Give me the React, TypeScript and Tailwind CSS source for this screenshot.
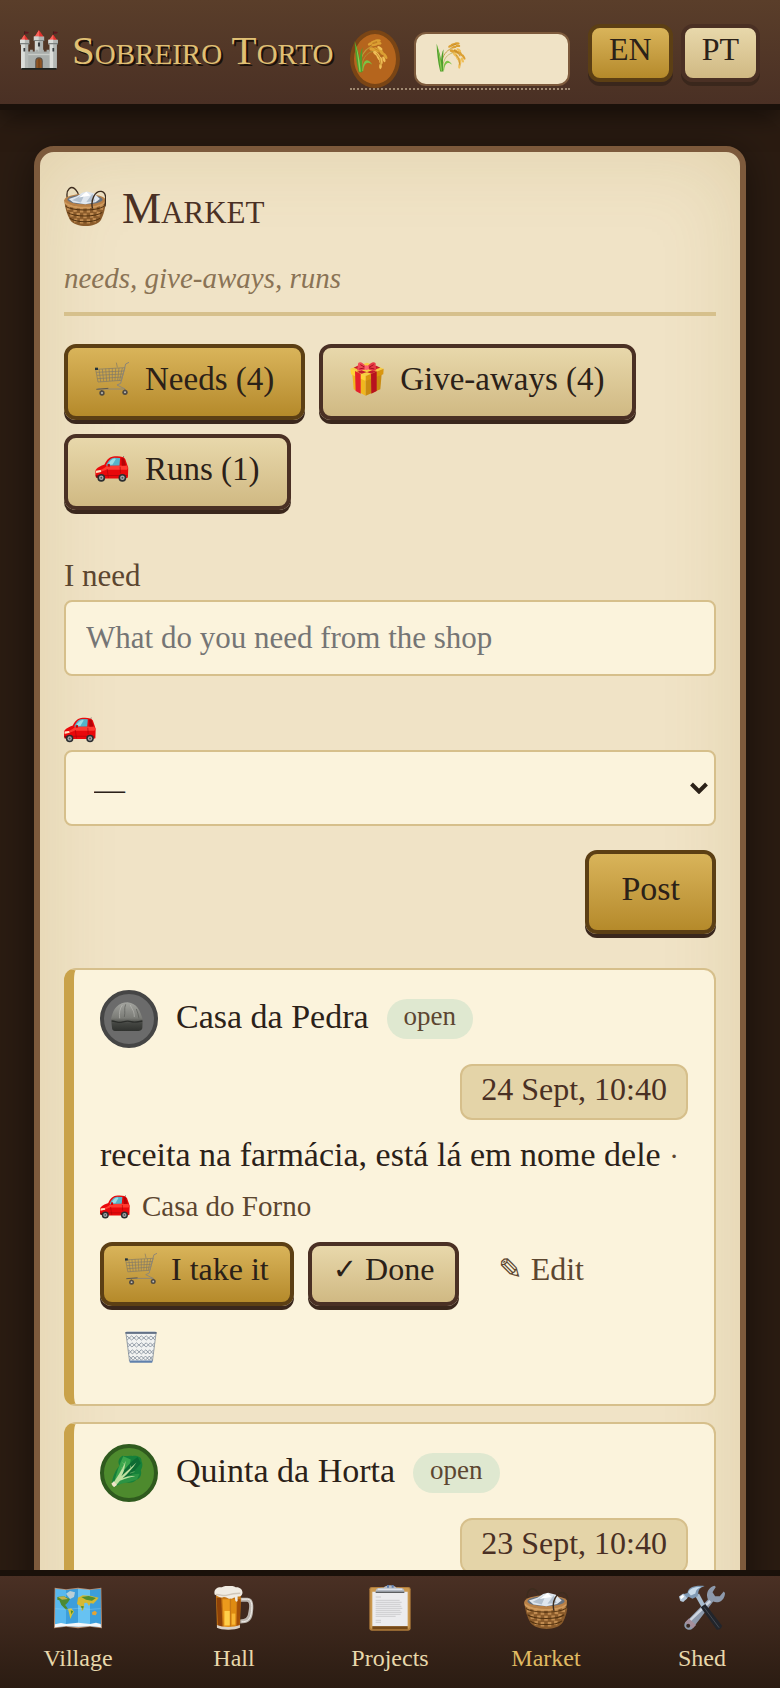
import React from "react";

type IconProps = { className: string };

function Castle({ className }: IconProps) {
  return (
    <svg viewBox="0 0 110 116" className={className} aria-hidden="true">
      <path d="M13 4v16M97 4v16M55 0v6" stroke="#2a1c18" strokeWidth="2" />
      <path d="M14 4l12 2-3 4-9 1zM98 4l12 2-3 4-9 1z" fill="#5d1620" />
      <path d="M2 30L13 13l12 17zM84 30L96 13l12 17zM42 20L55 0l14 20z" fill="#e2322d" />
      <path d="M42 20L55 0l1 20zM2 30l11-17 1 17zM84 30l12-17 1 17z" fill="#f8635a" />
      <path d="M40 19h30v12h-3v34H43V31h-3z" fill="#aeb3b1" />
      <path d="M40 19h14v46H43V31h-3z" fill="#d3d6d2" />
      <path d="M22 62h7v-5h8v5h8v-5h8v5h8v-5h8v5h8v-5h8v5h7v50H22z" fill="#a9aeab" />
      <path d="M22 69h68v4H22z" fill="#c9ccc8" />
      <path d="M0 28h27v13h-3v71H3V41H0zM82 28h28v13h-3v71H86V41h-4z" fill="#b5b9b6" />
      <path d="M0 28h14v84H3V41H0zM82 28h14v84H86V41h-4z" fill="#dcdeda" />
      <path d="M0 38h27v3H0zM82 38h28v3H82zM40 29h30v3H40z" fill="#7c817f" />
      <path d="M10 52h5v10h-5zM94 52h5v10h-5zM52 36h6v12h-6z" fill="#3b3f42" />
      <path d="M44 112V91a11 12 0 0 1 22 0v21z" fill="#5b5148" />
      <path d="M47 112V92a8 9 0 0 1 16 0v20z" fill="#8f5523" />
      <path d="M55 84v28" stroke="#59300f" strokeWidth="2" />
      <path d="M4 110h102v5H4z" fill="#20231f" />
    </svg>
  );
}

function Wheat({ className }: IconProps) {
  return (
    <svg viewBox="0 0 100 100" className={className} aria-hidden="true">
      <path d="M18 97C16 60 22 22 80 12" fill="none" stroke="#bf9a3a" strokeWidth="3" />
      <path d="M22 95C22 60 34 30 84 34" fill="none" stroke="#a8a23a" strokeWidth="2" />
      <path d="M14 98C6 66 3 36 2 6 9 28 14 42 17 60 18 46 20 34 25 24 24 52 22 70 25 98z" fill="#4e9f2b" />
      <path d="M16 96c-5-30-5-58-14-90 9 30 15 54 18 90z" fill="#8fcc52" />
      <path d="M24 94c2-32 14-42 30-18-14-12-24-6-27 18z" fill="#7cc344" />
      <g fill="#dca033">
        <ellipse cx="48" cy="14" rx="8" ry="4" transform="rotate(-25 48 14)" />
        <ellipse cx="58" cy="8" rx="9" ry="4" transform="rotate(-15 58 8)" />
        <ellipse cx="70" cy="5" rx="9" ry="4" />
        <ellipse cx="60" cy="17" rx="9" ry="4" transform="rotate(-10 60 17)" />
        <ellipse cx="73" cy="13" rx="8" ry="4" />
        <ellipse cx="54" cy="30" rx="9" ry="5" transform="rotate(15 54 30)" />
        <ellipse cx="67" cy="32" rx="10" ry="5" transform="rotate(35 67 32)" />
        <ellipse cx="80" cy="38" rx="11" ry="5" transform="rotate(50 80 38)" />
        <ellipse cx="92" cy="50" rx="10" ry="4" transform="rotate(60 92 50)" />
      </g>
      <g fill="#efbe57">
        <ellipse cx="64" cy="42" rx="9" ry="5" transform="rotate(40 64 42)" />
        <ellipse cx="72" cy="52" rx="11" ry="5" transform="rotate(65 72 52)" />
        <ellipse cx="79" cy="64" rx="11" ry="5" transform="rotate(80 79 64)" />
        <ellipse cx="78" cy="80" rx="9" ry="4" transform="rotate(95 78 80)" />
        <ellipse cx="88" cy="60" rx="9" ry="4" transform="rotate(70 88 60)" />
        <ellipse cx="76" cy="27" rx="9" ry="4" transform="rotate(35 76 27)" />
      </g>
      <path d="M60 28l12 6 8 14M66 42l10 14 4 22M54 12l14-5" stroke="#b67a1f" strokeWidth="2" fill="none" />
    </svg>
  );
}

function Basket({ className }: IconProps) {
  return (
    <svg viewBox="0 0 124 118" className={className} aria-hidden="true">
      <path d="M10 38C4 8 22-2 34 10c6 6 8 12 9 18" fill="none" stroke="#3d2c1e" strokeWidth="4" />
      <path d="M1 42h122c0 24-6 42-14 58-16 24-74 24-91 0C9 84 3 66 1 42z" fill="#8a5b2b" />
      <g stroke="#c08b50" strokeWidth="10">
        <path d="M12 58l2 13M32 62l1 14M52 64v14M72 64v14M92 62l-1 14M112 56l-2 14" />
        <path d="M22 77l2 13M42 80v14M62 81v14M82 80v14M102 76l-2 13" />
        <path d="M34 96l1 11M52 98v13M72 98v13M90 95l-1 12" />
      </g>
      <path d="M5 60c20 14 92 14 113 0M10 78c20 14 84 14 103 0M17 95c18 14 72 14 90 0" stroke="#51310f" strokeWidth="3" fill="none" />
      <ellipse cx="62" cy="42" rx="61" ry="19" fill="#b98046" />
      <ellipse cx="62" cy="40" rx="52" ry="14" fill="#67727f" />
      <path d="M14 38l24-8 16-10 14-4 22 6 16 16-13 10-30 6-36-5z" fill="#dfe6ee" />
      <path d="M24 42l38-20-12 27zM66 47l18-24 8 22z" fill="#b3c0ce" />
      <path d="M44 34l22-17 12 11z" fill="#fff" />
      <path d="M1 42c8 22 104 28 122 0v7c-18 24-112 22-121 2z" fill="#d09a5c" />
      <path d="M84 66C78 40 92 14 110 16c16 4 14 20 11 44" fill="none" stroke="#3d2c1e" strokeWidth="4" />
    </svg>
  );
}

function Cart({ className }: IconProps) {
  return (
    <svg viewBox="0 0 102 102" className={className} aria-hidden="true">
      <g fill="none" stroke="#7d7768" strokeWidth="2">
        <path d="M2 22l7 38 70-5 11-38zM4 31l83-4M6 40l78-4M7 50l74-5" />
        <path d="M12 21l5 38M22 21l4 37M32 20l3 38M42 20l2 37M52 19v38M62 19l-2 37M72 18l-4 37M82 18l-8 37" />
        <path d="M64 2l3 14" />
      </g>
      <path d="M102 1l-10 5-15 58-11 5 24 12H8" fill="none" stroke="#8d8678" strokeWidth="3" strokeLinejoin="round" />
      <path d="M4 82l36-3M20 84v8M90 82v6" stroke="#5e594e" strokeWidth="3" />
      <path d="M0 17h9v7H0z" fill="#24333b" />
      <circle cx="21" cy="93" r="8" fill="#514b43" />
      <circle cx="90" cy="91" r="8" fill="#514b43" />
      <circle cx="21" cy="93" r="3" fill="#c3bfb6" />
      <circle cx="90" cy="91" r="3" fill="#c3bfb6" />
    </svg>
  );
}

function Gift({ className }: IconProps) {
  return (
    <svg viewBox="0 0 100 102" className={className} aria-hidden="true">
      <path d="M6 36l40 18v47L10 82z" fill="#f0b71e" />
      <path d="M46 54l48-18-4 46-44 19z" fill="#c98a10" />
      <path d="M0 20L50 2l50 18-54 22z" fill="#f7ce42" />
      <path d="M0 20l46 22v15L2 37z" fill="#ffd338" />
      <path d="M46 42l54-22-1 17-53 20z" fill="#d9960f" />
      <path d="M14 27l17 8v60l-15-8z" fill="#e4202c" />
      <path d="M62 36l17-8v59l-16 8z" fill="#b8121f" />
      <path d="M22 11l56 17-14 7-54-18zM78 11L20 29l14 6 56-18z" fill="#c51c2a" />
      <path d="M48 16C36-4 22-2 23 8l-3 17c10 3 22-1 28-7z" fill="#f04a56" />
      <path d="M50 16C62-4 78-2 76 8l2 17c-10 3-22-1-28-7z" fill="#e73946" />
      <path d="M30 8l16 9-19 4M70 8l-16 9 18 4" stroke="#a81120" strokeWidth="3" fill="none" />
      <ellipse cx="49" cy="17" rx="7" ry="7" fill="#ff6470" />
    </svg>
  );
}

function Car({ className }: IconProps) {
  return (
    <svg viewBox="0 0 102 80" className={className} aria-hidden="true">
      <path d="M84 10l3-10" stroke="#555" strokeWidth="2" />
      <path d="M0 46c2-10 18-16 28-20C36 10 44 2 60 1c16-1 28 1 32 9l9 26-1 30-8 3H8l-8-9z" fill="#e9080b" />
      <path d="M2 46c14-2 24-6 34-16l60-1 4 8-3 5H34L2 54z" fill="#ff3a30" />
      <path d="M33 28C40 12 48 6 58 5l18 1-2 23-40 1z" fill="#55b4c9" />
      <path d="M39 26c6-11 12-17 20-18l4 1-11 18z" fill="#9bdde4" />
      <path d="M80 6l8 2 6 21-13 1z" fill="#b40408" />
      <path d="M36 40l4 27M76 33l1 20M2 60h96" stroke="#aa0509" strokeWidth="2" fill="none" />
      <path d="M2 45l14-2 2 6-16 3z" fill="#ffe3c5" />
      <path d="M0 60h10v7H2z" fill="#8b0306" />
      <circle cx="18" cy="67" r="12" fill="#2b2d2f" />
      <circle cx="83" cy="67" r="12" fill="#2b2d2f" />
      <circle cx="18" cy="67" r="7" fill="#a7abad" />
      <circle cx="83" cy="67" r="7" fill="#a7abad" />
      <circle cx="18" cy="67" r="3" fill="#505456" />
      <circle cx="83" cy="67" r="3" fill="#505456" />
      <path d="M37 25l7-1 1 8-7 1z" fill="#c30509" />
    </svg>
  );
}

function Rock({ className }: IconProps) {
  return (
    <svg viewBox="0 0 96 88" className={className} aria-hidden="true">
      <defs>
        <linearGradient id="stone" x1="0" y1="0" x2="0" y2="1">
          <stop offset="0" stopColor="#a3a49f" />
          <stop offset="0.55" stopColor="#7a7b76" />
          <stop offset="0.72" stopColor="#454743" />
          <stop offset="1" stopColor="#2f312e" />
        </linearGradient>
      </defs>
      <path d="M0 50C4 34 8 22 16 14 26 4 38 0 50 0c14 2 24 8 30 16 8 12 12 24 15 36l-1 26c-2 6-6 8-12 8H12c-6-1-9-4-9-10z" fill="url(#stone)" />
      <path d="M34 8c-8 12-10 24-8 40M58 8c4 12 12 16 12 36" stroke="#bcbdb7" strokeWidth="3" fill="none" opacity="0.6" />
      <path d="M44 6c-6 14 0 22-4 38M76 20c4 10 6 18 8 28" stroke="#5b5c58" strokeWidth="3" fill="none" opacity="0.7" />
      <path d="M2 56c12 0 18 6 28 4s18-6 30-2 22 0 34-2" stroke="#2c2e2b" strokeWidth="4" fill="none" />
    </svg>
  );
}

function Lettuce({ className }: IconProps) {
  return (
    <svg viewBox="0 0 100 102" className={className} aria-hidden="true">
      <path d="M2 92C4 66 14 48 26 34 18 20 26 6 36 2c12 4 20-2 32 1 14-2 30 4 28 16 6 12 2 22-2 30 4 14-2 26-14 30-10 12-28 10-38 6L8 102z" fill="#15813a" />
      <path d="M8 94C14 62 26 30 38 4l24 10-6 34z" fill="#3aa54c" />
      <path d="M12 94C30 60 52 28 84 6l10 20-30 36z" fill="#0d6c33" />
      <path d="M14 96c22-24 42-34 76-36l-8 18-26 8z" fill="#2c9444" />
      <path d="M2 96C18 70 32 52 46 18 42 44 40 54 32 68 50 50 66 38 80 24 68 42 54 58 36 74c16-6 28-8 40-6-16 3-32 7-48 14L10 102z" fill="#bfe0a0" />
      <path d="M0 92l8-8 10 12-10 6z" fill="#f2e3c9" />
      <path d="M42 32l-6-8M40 46l-8-5M62 44l-1-10M60 58l14-5" stroke="#86c878" strokeWidth="2" />
    </svg>
  );
}

function Trash({ className }: IconProps) {
  return (
    <svg viewBox="0 0 90 92" className={className} aria-hidden="true">
      <path d="M2 6h86L78 88H12z" fill="#f1f2f1" />
      <g fill="none" stroke="#6f7c8c" strokeWidth="2">
        <path d="M4 14l14 12 14-12 14 12 14-12 14 12 12-12M5 26l13-12 14 12 14-12 14 12 14-12 11 12" />
        <path d="M6 34l13 12 13-12 14 12 14-12 12 12 12-12M7 46l12-12 13 12 14-12 14 12 12-12 11 12" />
        <path d="M9 54l11 12 13-12 13 12 13-12 11 12 11-12M9 66l11-12 13 12 13-12 13 12 11-12 10 12" />
        <path d="M11 72l11 12 12-12 12 12 12-12 11 12 9-12M12 84l10-12 12 12 12-12 12 12 11-12 9 12" />
        <path d="M2 8l10 78M88 8L78 86" />
      </g>
      <path d="M0 3h90v5H0z" fill="#4f5f78" />
      <path d="M3 2h84" stroke="#aeb9c9" strokeWidth="2" />
      <path d="M11 85h68l-2 6H13z" fill="#6080ac" />
    </svg>
  );
}

function WorldMap({ className }: IconProps) {
  return (
    <svg viewBox="0 0 144 126" className={className} aria-hidden="true">
      <path d="M2 2l34 5 36-5 36 5 34-5 2 122-36-5-36 5-36-5-36 5z" fill="#b98f72" />
      <path d="M4 5l32 4v108l-33 4z" fill="#58b8ee" />
      <path d="M36 9l36-4v114l-36-2z" fill="#3c9edc" />
      <path d="M72 5l36 4v108l-36 2z" fill="#67c2f2" />
      <path d="M108 9l32-4 1 116-33-4z" fill="#3c9edc" />
      <path d="M36 20l12-8 15 4-3 14-12 6z" fill="#b9cfd6" />
      <path d="M10 30l20-2 18 8-6 10-8 8 8 12-6 2-14-14-6-14-6-2z" fill="#4c8a34" />
      <path d="M12 30l18-2 12 8-18 2z" fill="#c3b24a" />
      <path d="M42 66l10-2 8 10-6 10-5 12-3-14z" fill="#d6c536" />
      <path d="M50 70l8 3-6 9z" fill="#528d2d" />
      <path d="M72 32l14-7 22 1 26 6-6 8-10 10-8-2-5 9-6-10-8 1-1 16-6 9-5-16-10-6z" fill="#d5b933" />
      <path d="M82 30l22-3 22 6-12 8-18-3zM80 58l9-1-2 12z" fill="#4f8e34" />
      <path d="M114 76l9-5 6 6-4 8-10-2z" fill="#e2a337" />
      <path d="M3 112l18-4 15 3 36-4 36 4 18-4 14 4 1 10-33-4-36 2-36-2-33 4z" fill="#f3f7fa" />
      <path d="M4 65l32 2 36-3 36 3 32-2" stroke="#a8dcf6" strokeWidth="1" fill="none" />
    </svg>
  );
}

function Beer({ className }: IconProps) {
  return (
    <svg viewBox="0 0 122 134" className={className} aria-hidden="true">
      <path d="M80 36h22c20 0 20 28 16 50-4 22-16 28-38 28v-12c16 0 22-6 24-18 4-18 6-36-4-36H80z" fill="#bdb7b0" />
      <path d="M84 40h18c16 0 15 26 11 46-4 18-14 23-29 23" fill="none" stroke="#f4f2ee" strokeWidth="3" />
      <path d="M6 28h76l-3 98c-12 8-58 8-70 0z" fill="#c77714" />
      <path d="M8 36h14l4 88-14-2z" fill="#8e4208" />
      <path d="M26 40h22v84H30z" fill="#ec9a1c" />
      <path d="M32 76h16v44H32z" fill="#ffcf4a" />
      <path d="M52 40h16l-2 84H52z" fill="#df8b12" />
      <path d="M54 84h11v34H54z" fill="#f8b634" />
      <path d="M71 40h10l-3 82h-9z" fill="#a24e08" />
      <path d="M9 119c16 8 52 8 70 0v8c-14 8-58 8-70 0z" fill="#d9d1c6" />
      <path d="M2 26C-2 10 10 2 24 4 38-4 58-2 66 4c14-2 24 10 20 20-2 8-10 8-14 8v14c-6 6-8-2-8-10-4-4-8 6-14 2-6 4-12-6-22-4-14 4-18-6-26-8z" fill="#f0ebe2" />
      <path d="M6 26c12-2 22 6 34 2s24-6 40-6" fill="none" stroke="#d0c6b8" strokeWidth="4" />
    </svg>
  );
}

function Clipboard({ className }: IconProps) {
  return (
    <svg viewBox="0 0 126 138" className={className} aria-hidden="true">
      <rect x="1" y="6" width="124" height="131" rx="7" fill="#b07c3b" />
      <rect x="4" y="9" width="118" height="122" rx="5" fill="#cb994f" />
      <path d="M10 20h106v104H10z" fill="#ececee" />
      <path d="M10 124h106v9H10z" fill="#744818" />
      <path d="M20 36h16M20 46h72M20 52h78M20 58h74M20 64h77M20 70h80M20 76h74M20 82h78M20 88h75M20 94h60M20 106h16M20 112h16" stroke="#bcbdc0" strokeWidth="2" />
      <path d="M20 18c0-8 6-10 24-10 4-10 34-10 38 0 18 0 24 2 24 10v4H20z" fill="#b4bac4" />
      <path d="M26 13h74" stroke="#dfe3e9" strokeWidth="4" />
      <path d="M20 20h86v4H20z" fill="#5c5e60" />
      <path d="M54 0h6v8h-6zM68 0h6v8h-6z" fill="#5f7fae" />
    </svg>
  );
}

function Tools({ className }: IconProps) {
  return (
    <svg viewBox="0 0 140 136" className={className} aria-hidden="true">
      <path d="M88 42c-8-18 2-38 20-42l4 4-10 16 8 12 14 0 12-14 4 4c0 22-20 34-36 26L42 130c-12 12-32-2-24-16z" fill="#8d99ab" />
      <path d="M92 44L22 112l6 4 70-66z" fill="#cfd6e0" />
      <path d="M42 130L18 112l12-12 22 20z" fill="#a58f9c" />
      <circle cx="28" cy="122" r="6" fill="#3b2a22" />
      <path d="M50 32l11-8 19 36-10 8z" fill="#a9bdcf" />
      <path d="M66 66l14-10 51 66c-2 10-10 14-16 12z" fill="#22252b" />
      <path d="M76 66l46 62" stroke="#454b55" strokeWidth="3" />
      <path d="M12 26l14-4C28 6 46-2 78 1c-14 5-18 11-19 19l-2 12-16 8-12-6-9 10z" fill="#7f9ab5" />
      <path d="M28 20C34 8 48 3 68 4 52 10 52 16 50 24l-14 6z" fill="#c9dceb" />
      <path d="M0 33l13-9 12 14-12 12-9-3z" fill="#b5c8da" />
      <path d="M3 34l9-6 4 6-10 8z" fill="#fff" />
    </svg>
  );
}

const goldButton =
  "border-[#5c3f14] bg-linear-to-b from-[#d9b45a] to-[#b58a2a] text-[#2b2118]";
const paleButton =
  "border-[#4a3024] bg-linear-to-b from-[#e8d8ab] to-[#d0b983] text-[#2b2118]";
const raised = "border-4 rounded-xl shadow-[0_4px_0_#3a271c]";

function TopBar() {
  const language = "h-[58px] px-[17px] pb-2 text-[32px] leading-none";
  return (
    <header className="relative z-10 flex items-start justify-between bg-linear-to-b from-[#5a3e2a] to-[#4a3024] px-5 pt-6 pb-3.5 shadow-[0_6px_0_#1a110a,0_12px_24px_rgba(0,0,0,0.5)]">
      <div className="flex h-[52px] items-center gap-3.5">
        <Castle className="h-10 w-[38px]" />
        <span className="text-[41px] leading-[52px] whitespace-nowrap text-[#e0c074] [font-variant-caps:small-caps] [text-shadow:2px_2px_0_#1a110a]">
          Sobreiro Torto
        </span>
      </div>
      <div className="flex items-start gap-[18px]">
        <button
          type="button"
          aria-label="House"
          className="mt-1.5 flex h-[60px] items-start gap-3.5 border-b-2 border-dotted border-[#a08a72]"
        >
          <span className="flex h-[58px] w-[50px] items-center rounded-[50%] border-4 border-[#7a4515] bg-[#b5651d] pb-1.5">
            <Wheat className="size-[34px]" />
          </span>
          <span className="mt-0.5 flex h-[54px] w-[156px] items-center rounded-xl border-2 border-[#7d5a3c] bg-[#f0e3c6] pb-1 pl-5">
            <Wheat className="size-[30px]" />
          </span>
        </button>
        <div className="flex gap-2">
          <button type="button" className={`${language} ${raised} ${goldButton}`}>
            EN
          </button>
          <button type="button" className={`${language} ${raised} ${paleButton}`}>
            PT
          </button>
        </div>
      </div>
    </header>
  );
}

type Tab = { label: string; Icon: React.FC<IconProps>; size: string; active?: boolean };

const tabs: Tab[] = [
  { label: "Needs (4)", Icon: Cart, size: "h-[34px] w-[34px]", active: true },
  { label: "Give-aways (4)", Icon: Gift, size: "h-[34px] w-[34px]" },
  { label: "Runs (1)", Icon: Car, size: "h-[26px] w-[34px]" },
];

type Need = {
  house: string;
  Icon: React.FC<IconProps>;
  badge: string;
  date: string;
  text?: string;
  run?: string;
};

const needs: Need[] = [
  {
    house: "Casa da Pedra",
    Icon: Rock,
    badge: "border-[#454545] bg-[#6b6b6b]",
    date: "24 Sept, 10:40",
    text: "receita na farmácia, está lá em nome dele",
    run: "Casa do Forno",
  },
  {
    house: "Quinta da Horta",
    Icon: Lettuce,
    badge: "border-[#2f5a1e] bg-[#4d8a2d]",
    date: "23 Sept, 10:40",
  },
];

function NeedActions() {
  const action = "flex h-16 items-center px-[21px] pb-2.5 text-[32px] leading-none whitespace-nowrap";
  return (
    <div className="mt-3 flex flex-wrap gap-3.5">
      <button type="button" className={`gap-3.5 ${action} ${raised} ${goldButton}`}>
        <Cart className="size-8" />I take it
      </button>
      <button type="button" className={`gap-2 ${action} ${raised} ${paleButton}`}>
        <span className="font-['DejaVu_Sans'] text-[29px] font-bold">✓</span>Done
      </button>
      <button type="button" className={`gap-2 border-4 border-transparent text-[#5c4630] ${action}`}>
        <span className="font-['DejaVu_Sans'] text-[29px] font-bold">✎</span>Edit
      </button>
      <button type="button" aria-label="Delete" className={`border-4 border-transparent ${action}`}>
        <Trash className="size-8" />
      </button>
    </div>
  );
}

function NeedCard({ house, Icon, badge, date, text, run }: Need) {
  return (
    <article className="min-h-[438px] rounded-xl border-2 border-l-[10px] border-[#d6bf8b] border-l-[#c9a24a] bg-[#fbf3dc] px-[26px] py-5">
      <div className="flex flex-wrap items-center gap-x-[18px] gap-y-4">
        <span className={`flex size-[58px] items-center justify-center rounded-full border-4 pr-1 pb-1 ${badge}`}>
          <Icon className="size-8" />
        </span>
        <h2 className="pb-1 text-[34px] leading-[40px] text-[#2b2118]">{house}</h2>
        <span className="h-10 rounded-full bg-[#dfe8d0] px-[17px] text-[27px] leading-[34px] text-[#5c4630]">
          open
        </span>
        <time className="ml-auto h-14 rounded-xl border-2 border-[#d6bf8b] bg-[#e4d4a8] px-[19px] text-[32px] leading-[46px] text-[#4a3024]">
          {date}
        </time>
      </div>
      {text && (
        <>
          <p className="mt-2.5 text-[34px] leading-[50px] text-[#2b2118]">
            {text}{" "}
            <span className="text-[#5c4630]">
              <span className="text-[29px] leading-none">· </span>
              <span className="text-[29px] leading-none whitespace-nowrap">
                <Car className="mr-3 inline h-6 w-[30px] align-[-3px]" />
                {run}
              </span>
            </span>
          </p>
          <NeedActions />
        </>
      )}
    </article>
  );
}

type NavItem = { label: string; Icon: React.FC<IconProps>; size: string; active?: boolean };

const navItems: NavItem[] = [
  { label: "Village", Icon: WorldMap, size: "h-[42px] w-12" },
  { label: "Hall", Icon: Beer, size: "h-11 w-10" },
  { label: "Projects", Icon: Clipboard, size: "h-[46px] w-[42px]" },
  { label: "Market", Icon: Basket, size: "h-[42px] w-[46px]", active: true },
  { label: "Shed", Icon: Tools, size: "h-[46px] w-[46px]" },
];

function BottomNav() {
  return (
    <nav className="z-10 grid grid-cols-5 border-t-[6px] border-[#1a110a] bg-linear-to-b from-[#4a3024] to-[#2b1c12] pt-2 pb-3.5">
      {navItems.map(({ label, Icon, size, active }) => (
        <a
          key={label}
          href={`#${label.toLowerCase()}`}
          className={`flex flex-col items-center text-[24px] leading-[32px] ${active ? "text-[#e0bb62]" : "text-[#e8d8ab]"}`}
        >
          <span className="mb-2.5 flex h-12 items-center">
            <Icon className={size} />
          </span>
          {label}
        </a>
      ))}
    </nav>
  );
}

export default function App() {
  const field =
    "h-[76px] w-full rounded-lg border-2 border-[#d6bf8b] bg-[#fbf3dc] text-[31px] text-[#2b2118]";
  return (
    <div className="flex h-screen flex-col bg-[#2b1c12] font-['Liberation_Serif',serif]">
      <TopBar />
      <main className="min-h-0 flex-1 overflow-y-auto px-[34px] pt-[42px] pb-10 [scrollbar-width:none]">
        <section className="rounded-[20px] border-[6px] border-[#7d5a3c] bg-[#f0e3c6] p-6 shadow-[0_8px_40px_rgba(0,0,0,0.5),inset_0_0_80px_rgba(139,105,20,0.15)]">
          <div className="border-b-4 border-[#d6c08c] pb-3.5">
            <h1 className="flex items-center gap-4 text-[44px] leading-[66px] text-[#4a3024] [font-variant-caps:small-caps]">
              <Basket className="mb-1.5 h-10 w-[42px]" />
              Market
            </h1>
            <p className="mt-4 text-[29px] leading-[40px] text-[#8a7355] italic">
              needs, give-aways, runs
            </p>
          </div>

          <div className="mt-7 flex flex-wrap gap-3.5">
            {tabs.map(({ label, Icon, size, active }) => (
              <button
                key={label}
                type="button"
                className={`flex h-[76px] items-center gap-4 px-[27px] pb-1.5 text-[33px] leading-none whitespace-nowrap ${raised} ${active ? goldButton : paleButton}`}
              >
                <Icon className={size} />
                {label}
              </button>
            ))}
          </div>

          <form className="mt-[46px]" onSubmit={(e) => e.preventDefault()}>
            <label htmlFor="need" className="mb-1 block text-[31px] leading-[40px] text-[#5c4630]">
              I need
            </label>
            <input
              id="need"
              type="text"
              placeholder="What do you need from the shop"
              className={`px-5 placeholder:text-[#757575] ${field}`}
            />
            <label htmlFor="run" aria-label="Run" className="mt-[34px] flex h-10 items-center">
              <Car className="h-[26px] w-8" />
            </label>
            <div className="grid items-center">
              <select id="run" className={`col-start-1 row-start-1 appearance-none pt-1 pl-7 ${field}`}>
                <option>—</option>
              </select>
              <svg
                viewBox="0 0 18 12"
                className="pointer-events-none col-start-1 row-start-1 mr-2 h-3 w-[18px] justify-self-end"
                aria-hidden="true"
              >
                <path d="M1.500 2l7.500 7.500L16.500 2" fill="none" stroke="#2b2118" strokeWidth="4" />
              </svg>
            </div>
            <div className="mt-6 flex justify-end">
              <button
                type="submit"
                className={`h-[84px] px-8 pb-1.5 text-[34px] leading-none ${raised} ${goldButton}`}
              >
                Post
              </button>
            </div>
          </form>

          <div className="mt-[34px] flex flex-col gap-4">
            {needs.map((need) => (
              <NeedCard key={need.house} {...need} />
            ))}
          </div>
        </section>
      </main>
      <BottomNav />
    </div>
  );
}
